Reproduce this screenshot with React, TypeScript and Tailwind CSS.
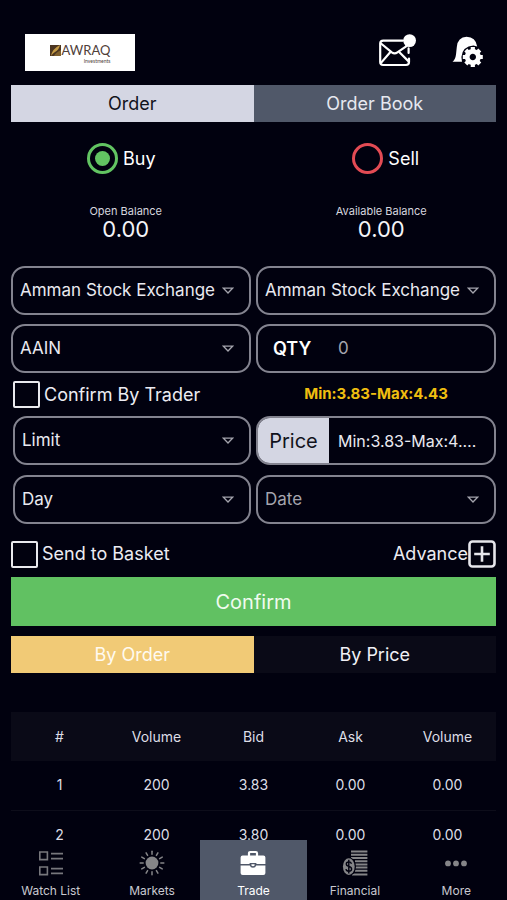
import {useState} from "react";
import type {ReactNode} from "react";

interface IFieldProps {
    id: string
    label: string
    options: string[]
    muted?: boolean
}

interface IQuote {
    id: number
    bidVolume: string
    bid: string
    ask: string
    askVolume: string
}

const quotes: IQuote[] = [
    {id: 1, bidVolume: "200", bid: "3.83", ask: "0.00", askVolume: "0.00"},
    {id: 2, bidVolume: "200", bid: "3.80", ask: "0.00", askVolume: "0.00"},
]

const columns = ["#", "Volume", "Bid", "Ask", "Volume"]

const fieldBox = "h-[49px] w-full rounded-[14px] border-2 border-[#83838f] bg-transparent"

function SelectField({id, label, options, muted}: IFieldProps) {
    return (
        <div className="relative">
            <select id={id} aria-label={label}
                    className={`${fieldBox} appearance-none pl-[7px] pr-8 text-[17px] ${muted ? "text-[#a5a5ae]" : "text-[#e9e9f0]"}`}>
                {options.map(option => <option key={option}>{option}</option>)}
            </select>
            <svg className="pointer-events-none absolute right-[17px] top-[21px]" width="12" height="8" viewBox="0 0 12 8" fill="none"
                 stroke="#a4a4ad" strokeWidth="1.3">
                <path d="M1.4 1.2h9.2L6 6z"/>
            </svg>
        </div>
    )
}

function CheckField({id, label}: { id: string, label: string }) {
    return (
        <label htmlFor={id} className="flex items-center gap-1 text-lg text-[#ececf2]">
            <input type="checkbox" id={id}
                   className="size-[27px] appearance-none rounded-xs border-2 border-[#e9e9ee] checked:bg-[#60c060]"/>
            {label}
        </label>
    )
}

function Balance({label, value}: { label: string, value: string }) {
    return (
        <div className="text-center">
            <div className="text-[11px] leading-3 text-[#d6d6df]">{label}</div>
            <div className="text-[22px] leading-6 text-[#f4f4f8]">{value}</div>
        </div>
    )
}

function MailIcon() {
    return (
        <svg width="38" height="34" viewBox="0 0 38 34" fill="none" stroke="#fff" strokeWidth="2.2"
             strokeLinecap="round" strokeLinejoin="round">
            <path d="M24 6.6H4.2Q1.2 6.6 1.2 9.6V28Q1.2 31 4.2 31H27Q30 31 30 28V24.6M29.6 19V14.4"/>
            <path d="M2 9.5 12.8 18.4Q15.6 20.4 18.4 18.4L27.5 12.2"/>
            <path d="M2.2 28.6 11.2 18.2M29.6 27.4 20.4 18.2"/>
            <circle cx="30.6" cy="6.6" r="6.4" fill="#fff" stroke="none"/>
        </svg>
    )
}

function BellGearIcon() {
    return (
        <svg width="32" height="32" viewBox="0 0 32 32">
            <path d="M0.5 25.8Q3.4 23.6 4 18.6L4.8 11Q5.8 1 14.6 .8 23.6 1 25.2 10.4L21.4 9.6Q10.5 10.4 9.4 21L10 25.8Z"
                  fill="#fff"/>
            <g transform="translate(20.8 21)">
                <circle r="5.6" fill="none" stroke="#fff" strokeWidth="4.8"/>
                <path stroke="#fff" strokeWidth="4.2"
                      d="M0 -10V-6M0 10V6M-10 0H-6M10 0H6M-7 -7 -4.5 -4.5M7 7 4.5 4.5M-7 7 -4.5 4.5M7 -7 4.5 -4.5"/>
            </g>
        </svg>
    )
}

function WatchIcon() {
    return (
        <svg width="26" height="26" viewBox="0 0 26 26" fill="none" stroke="#77777c" strokeWidth="1.6">
            <path d="M1.8 2h7.6v7.6H1.8zM1.8 17h7.6v7.6H1.8zM13 3.6h12M13 8.6h12M13 18.6h12M13 23.4h12"/>
        </svg>
    )
}

function SunIcon() {
    return (
        <svg width="26" height="26" viewBox="0 0 26 26" stroke="#858588" strokeWidth="1.5" strokeLinecap="round">
            <circle cx="13" cy="13" r="6.4" fill="#858588" stroke="none"/>
            {Array.from({length: 12}, (_, i) => (
                <path key={i} d="M13 1.2v3" transform={`rotate(${i * 30} 13 13)`}/>
            ))}
        </svg>
    )
}

function BriefcaseIcon() {
    return (
        <svg width="26" height="26" viewBox="0 0 26 26">
            <path d="M9 6V3.2Q9 2 10.2 2h5.6Q17 2 17 3.2V6" fill="none" stroke="#fff" strokeWidth="2.2"/>
            <path fill="#fff"
                  d="M2.6 5.4h20.8Q25.4 5.4 25.4 7.4V14H16.4V13H9.6V14H.6V7.4Q.6 5.4 2.6 5.4zM.6 15.4H9.8Q10.4 17.8 13 17.8T16.2 15.4H25.4V23Q25.4 25 23.4 25H2.6Q.6 25 .6 23z"/>
            <path d="M11.4 14.2h3.2v1.2q-1.6 1.6-3.2 0z" fill="#fff"/>
        </svg>
    )
}

function CoinsIcon() {
    return (
        <svg width="26" height="26" viewBox="0 0 26 26">
            <path stroke="#858588" strokeWidth="2"
                  d="M9 1.6h16.4M9 4.8h16.4M9 8h16.4M13 11.2h12.4M13 14.4h12.4M13 17.6h12.4M13 20.8h12.4M10 24.4h15.4"/>
            <ellipse cx="7" cy="16.6" rx="7" ry="9.4" fill="#01010f"/>
            <ellipse cx="6.8" cy="16.6" rx="5.9" ry="8.4" fill="#858588"/>
            <path d="M9.5 13.7Q8.7 11.8 6.8 11.9 4.3 12 4.3 14 4.3 15.8 6.8 16.4 9.7 17.1 9.6 19.2 9.4 21.2 6.8 21.3 4.3 21.2 3.9 19.2M6.8 9.8v13.6"
                  fill="none" stroke="#01010f" strokeWidth="1.4"/>
        </svg>
    )
}

function DotsIcon() {
    return (
        <svg width="26" height="26" viewBox="0 0 26 26" fill="#858588">
            <circle cx="5" cy="13.4" r="2.9"/>
            <circle cx="13" cy="13.4" r="2.9"/>
            <circle cx="21" cy="13.4" r="2.9"/>
        </svg>
    )
}

const navItems: { name: string, icon: ReactNode }[] = [
    {name: "Watch List", icon: <WatchIcon/>},
    {name: "Markets", icon: <SunIcon/>},
    {name: "Trade", icon: <BriefcaseIcon/>},
    {name: "Financial", icon: <CoinsIcon/>},
    {name: "More", icon: <DotsIcon/>},
]

export default function App() {

    const [tab, setTab] = useState("Order");
    const [side, setSide] = useState("Buy");
    const [depth, setDepth] = useState("By Order");

    return (
        <div className="min-h-screen bg-[#01010f] pt-[34px] font-[Inter,sans-serif] text-white">
            <header className="flex items-start justify-between pl-[25px] pr-[23px]">
                <a href="#home" className="flex h-[37px] w-[110px] justify-center bg-white pt-2">
                    <svg className="mt-[3px]" width="11" height="11" viewBox="0 0 11 11">
                        <path d="M0 0h11v11H0z" fill="#4b3520"/>
                        <path d="M1 11Q2 4 10 0 9 5 5 7 3 8 1 11z" fill="#c59b45"/>
                        <path d="M4 11Q5 8 11 5v6z" fill="#80602d"/>
                    </svg>
                    <span className="ml-px flex flex-col items-end font-[Lato,sans-serif] text-[#4f4039]">
                        <span className="text-[13px] leading-4">AWRAQ</span>
                        <span className="text-[5px] leading-[6px]">Investments</span>
                    </span>
                </a>
                <div className="flex gap-[35px]">
                    <button aria-label="Messages"><MailIcon/></button>
                    <button aria-label="Alert settings" className="pt-[2px]"><BellGearIcon/></button>
                </div>
            </header>

            <main className="px-[11px] pb-[60px]">
                <div className="mt-[14px] grid grid-cols-2">
                    {["Order", "Order Book"].map(name => (
                        <button key={name} onClick={() => setTab(name)}
                                className={`h-[37px] text-lg ${tab === name ? "bg-[#d4d6e3] text-[#11131c]" : "bg-[#505869] text-[#e6e8f0]"}`}>
                            {name}
                        </button>
                    ))}
                </div>

                <div className="mt-[21px] grid grid-cols-2 gap-11">
                    {["Buy", "Sell"].map(name => (
                        <label key={name} htmlFor={name} className="flex items-center justify-center gap-[5px] text-lg">
                            <input type="radio" id={name} name="side" checked={side === name}
                                   onChange={() => setSide(name)}
                                   className={`size-[31px] appearance-none rounded-full border-3 bg-clip-content p-[5px] ${name === "Buy" ? "border-[#62c462] checked:bg-[#62c462]" : "border-[#e34b54] checked:bg-[#e34b54]"}`}/>
                            {name}
                        </label>
                    ))}
                </div>

                <div className="mt-[31px] grid grid-cols-2 gap-[26px]">
                    <Balance label="Open Balance" value="0.00"/>
                    <Balance label="Available Balance" value="0.00"/>
                </div>

                <div className="mt-[25px] grid grid-cols-2 gap-x-[5px] gap-y-[9px]">
                    <SelectField id="market" label="Market" options={["Amman Stock Exchange"]}/>
                    <SelectField id="exchange" label="Exchange" options={["Amman Stock Exchange"]}/>
                    <SelectField id="symbol" label="Symbol" options={["AAIN"]}/>
                    <div className={`${fieldBox} flex items-center pl-[15px]`}>
                        <label htmlFor="qty" className="w-[65px] text-lg font-semibold">QTY</label>
                        <input type="text" id="qty" placeholder="0"
                               className="min-w-0 flex-1 bg-transparent text-[17px] outline-none placeholder:text-[#a5a5ae]"/>
                    </div>
                </div>

                <div className="grid h-[43px] grid-cols-2 items-center gap-[5px]">
                    <div className="pl-[2px]"><CheckField id="confirmTrader" label="Confirm By Trader"/></div>
                    <div className="text-center text-[15px] font-bold text-[#efbe10]">Min:3.83-Max:4.43</div>
                </div>

                <div className="grid grid-cols-2 gap-x-[5px] gap-y-[10px]">
                    <div className="pl-[2px]"><SelectField id="orderType" label="Order type" options={["Limit", "Market"]}/></div>
                    <div className={`${fieldBox} flex items-center overflow-hidden`}>
                        <label htmlFor="price" className="flex h-full w-[71px] items-center justify-center bg-[#d4d6e3] text-xl text-[#11131c]">
                            Price
                        </label>
                        <input type="text" id="price" placeholder="Min:3.83-Max:4.43"
                               className="ml-[9px] mr-3 min-w-0 flex-1 text-ellipsis bg-transparent text-base outline-none placeholder:text-[#e9e9f0]"/>
                    </div>
                    <div className="pl-[2px]"><SelectField id="validity" label="Validity" options={["Day"]}/></div>
                    <SelectField id="date" label="Date" options={["Date"]} muted/>
                </div>

                <div className="mt-4 flex items-center justify-between">
                    <CheckField id="basket" label="Send to Basket"/>
                    <button className="flex items-center text-lg text-[#ececf2]">
                        Advance
                        <svg width="28" height="28" viewBox="0 0 28 28" fill="none" stroke="#e6e6ec">
                            <rect x="1.5" y="1.5" width="25" height="25" rx="3" strokeWidth="2.6"/>
                            <path d="M14 6.2v15.6M6.2 14h15.6" strokeWidth="2.6"/>
                        </svg>
                    </button>
                </div>

                <button className="mt-[9px] h-[49px] w-full bg-[#61c162] text-xl text-[#f0fbef]">Confirm</button>

                <div className="mt-[10px] grid grid-cols-2">
                    {["By Order", "By Price"].map(name => (
                        <button key={name} onClick={() => setDepth(name)}
                                className={`h-[37px] text-lg ${depth === name ? "bg-[#f1ca76] text-[#fffaf0]" : "bg-[#0a0a17] text-[#f0f0f5]"}`}>
                            {name}
                        </button>
                    ))}
                </div>

                <table className="mt-[39px] w-full table-fixed text-center text-sm text-[#dedee6]">
                    <thead>
                    <tr className="h-[49px] bg-[#0a0a17]">
                        {columns.map((column, i) => <th key={i} className="font-normal">{column}</th>)}
                    </tr>
                    </thead>
                    <tbody>
                    {quotes.map(quote => (
                        <tr key={quote.id} className="h-[49px] border-b border-[#0d0d1a]">
                            <td>{quote.id}</td>
                            <td>{quote.bidVolume}</td>
                            <td>{quote.bid}</td>
                            <td>{quote.ask}</td>
                            <td>{quote.askVolume}</td>
                        </tr>
                    ))}
                    </tbody>
                </table>
            </main>

            <nav className="fixed inset-x-0 bottom-0 grid h-[60px] grid-cols-5 bg-[#01010f]">
                {navItems.map(({name, icon}) => (
                    <a key={name} href="#"
                       className={`flex flex-col items-center gap-[6px] pt-[10px] text-xs leading-[18px] ${name === "Trade" ? "-mx-[3px] bg-[#505869] text-white" : "text-[#c9c9d0]"}`}>
                        {icon}
                        {name}
                    </a>
                ))}
            </nav>
        </div>
    )
}
